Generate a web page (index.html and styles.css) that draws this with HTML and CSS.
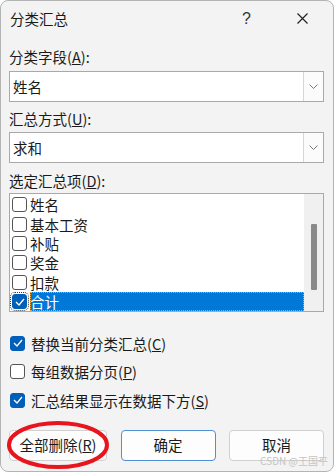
FILE: index.html
```html
<!DOCTYPE html>
<html lang="zh">
<head>
  <meta charset="UTF-8">
  <title>分类汇总</title>
  <link rel="stylesheet" href="styles.css">
</head>
<body>
  <div class="dialog">
    <!-- タイトルバー -->
    <div class="titlebar">
      <span class="title">分类汇总</span>
      <span class="help">?</span>
      <span class="close">
        <svg width="11" height="11" viewBox="0 0 11 11"><path d="M0.5 0.5 L10.5 10.5 M10.5 0.5 L0.5 10.5" stroke="#222" stroke-width="1.2"/></svg>
      </span>
    </div>

    <div class="content">
      <label class="field-label first">分类字段(<u>A</u>):</label>
      <div class="combo">
        <span class="combo-text">姓名</span>
        <span class="combo-btn"><svg width="9" height="5" viewBox="0 0 9 5"><path d="M0.5 0.5 L4.5 4.5 L8.5 0.5" fill="none" stroke="#777" stroke-width="1"/></svg></span>
      </div>

      <label class="field-label second">汇总方式(<u>U</u>):</label>
      <div class="combo">
        <span class="combo-text">求和</span>
        <span class="combo-btn"><svg width="9" height="5" viewBox="0 0 9 5"><path d="M0.5 0.5 L4.5 4.5 L8.5 0.5" fill="none" stroke="#777" stroke-width="1"/></svg></span>
      </div>

      <label class="field-label third">选定汇总项(<u>D</u>):</label>
      <div class="listbox">
        <div class="list-items">
          <div class="list-row"><span class="box"></span><span class="row-text">姓名</span></div>
          <div class="list-row"><span class="box"></span><span class="row-text">基本工资</span></div>
          <div class="list-row"><span class="box"></span><span class="row-text">补贴</span></div>
          <div class="list-row"><span class="box"></span><span class="row-text">奖金</span></div>
          <div class="list-row"><span class="box"></span><span class="row-text">扣款</span></div>
          <div class="list-row selected">
            <span class="box checked focus">
              <svg width="10" height="8" viewBox="0 0 10 8"><path d="M1 4 L4 7 L9 1" fill="none" stroke="#fff" stroke-width="1.3"/></svg>
            </span>
            <span class="row-text">合计</span>
          </div>
        </div>
        <div class="scrollbar"><div class="thumb"></div></div>
      </div>

      <div class="options">
        <div class="option">
          <span class="cb checked"><svg width="10" height="8" viewBox="0 0 10 8"><path d="M1 4 L4 7 L9 1" fill="none" stroke="#fff" stroke-width="1.3"/></svg></span>
          <span>替换当前分类汇总(<u>C</u>)</span>
        </div>
        <div class="option">
          <span class="cb"></span>
          <span>每组数据分页(<u>P</u>)</span>
        </div>
        <div class="option">
          <span class="cb checked"><svg width="10" height="8" viewBox="0 0 10 8"><path d="M1 4 L4 7 L9 1" fill="none" stroke="#fff" stroke-width="1.3"/></svg></span>
          <span>汇总结果显示在数据下方(<u>S</u>)</span>
        </div>
      </div>

      <div class="buttons">
        <button class="btn remove">全部删除(<u>R</u>)</button>
        <button class="btn default">确定</button>
        <button class="btn">取消</button>
      </div>
    </div>

    <!-- 赤い丸の注記 -->
    <svg class="mark" width="110" height="52" viewBox="0 0 110 52">
      <ellipse cx="52" cy="25" rx="49" ry="22" fill="none" stroke="#e8141e" stroke-width="4"/>
    </svg>
    <span class="watermark">CSDN @王国平</span>
  </div>
</body>
</html>
```

FILE: styles.css
```css
body {
  margin: 0;
  padding: 0;
  background-color: #fff;
  font-family: "Noto Sans CJK SC", "Noto Sans", sans-serif;
  color: #1a1a1a;
}
.dialog {
  position: relative;
  width: 334px;
  height: 472px;
  box-sizing: border-box;
  border: 1px solid #b4b4b4;
  border-radius: 8px;
  background-color: #f3f3f3;
  overflow: hidden;
}
.titlebar {
  display: flex;
  align-items: center;
  height: 35px;
  padding-left: 9px;
  font-size: 14.5px;
}
.title {
  flex-grow: 1;
}
.help {
  width: 20px;
  margin-right: 35px;
  font-family: "Liberation Sans", sans-serif;
  font-size: 16px;
  color: #333;
}
.close {
  display: flex;
  width: 36px;
}
.content {
  padding: 0 9px 0 8px;
  font-size: 14.5px;
}
.field-label {
  display: block;
  height: 20px;
  line-height: 20px;
}
.field-label.first {
  margin-top: 11px;
  margin-bottom: 4px;
}
.field-label.second {
  margin-top: 7px;
  margin-bottom: 3px;
}
.field-label.third {
  margin-top: 8px;
  margin-bottom: 2px;
}
.combo {
  display: flex;
  height: 31px;
  box-sizing: border-box;
  border: 1px solid #a9a9a9;
  background-color: #fff;
}
.combo-text {
  flex-grow: 1;
  padding-left: 3px;
  line-height: 29px;
}
.combo-btn {
  display: flex;
  align-items: center;
  justify-content: center;
  width: 19px;
  border-left: 1px solid #d6d6d6;
  background-color: #fbfbfb;
}
.listbox {
  display: flex;
  height: 119px;
  box-sizing: border-box;
  border: 1px solid #a9a9a9;
  background-color: #fff;
}
.list-items {
  flex-grow: 1;
  padding-top: 1px;
}
.list-row {
  display: flex;
  align-items: center;
  height: 19.4px;
}
.box {
  display: flex;
  align-items: center;
  justify-content: center;
  width: 13px;
  height: 13px;
  margin: 0 3px 0 2px;
  border: 1px solid #555;
  border-radius: 3px;
  background-color: #fff;
}
.box.checked {
  background-color: #005fb8;
  border-color: #005fb8;
}
.box.focus {
  outline: 1px dotted #333;
  outline-offset: 1px;
}
.row-text {
  flex-grow: 1;
  height: 19px;
  line-height: 19px;
}
.selected .row-text {
  background-color: #0078d7;
  color: #fff;
  outline: 1px dotted #e8a33c;
  outline-offset: -1px;
}
.scrollbar {
  width: 19px;
  background-color: #f0f0f0;
  display: flex;
  justify-content: center;
  padding-top: 30px;
  box-sizing: border-box;
}
.thumb {
  width: 6px;
  height: 66px;
  border-radius: 1px;
  background-color: #8a8a8a;
}
.options {
  margin-top: 17px;
}
.option {
  display: flex;
  align-items: center;
  height: 28.5px;
}
.cb {
  display: flex;
  align-items: center;
  justify-content: center;
  width: 13px;
  height: 13px;
  margin: 0 6px 0 1px;
  border: 1px solid #555;
  border-radius: 3px;
  background-color: #fff;
}
.cb.checked {
  background-color: #005fb8;
  border-color: #005fb8;
}
.buttons {
  display: flex;
  justify-content: space-between;
  margin-top: 15px;
}
.btn {
  width: 95px;
  height: 31px;
  border: 1px solid #d0d0d0;
  border-radius: 4px;
  background-color: #fdfdfd;
  font-family: "Noto Sans CJK SC", sans-serif;
  font-size: 14.5px;
  line-height: 18px;
  color: #1a1a1a;
  padding: 0;
}
.btn.remove {
  width: 98px;
}
.btn.default {
  width: 95px;
  border-color: #4f8fd3;
}
.mark {
  position: absolute;
  left: 5px;
  top: 419px;
}
.watermark {
  position: absolute;
  right: 5px;
  bottom: 5px;
  font-size: 10px;
  line-height: 10px;
  color: #c4c4c4;
}
```
